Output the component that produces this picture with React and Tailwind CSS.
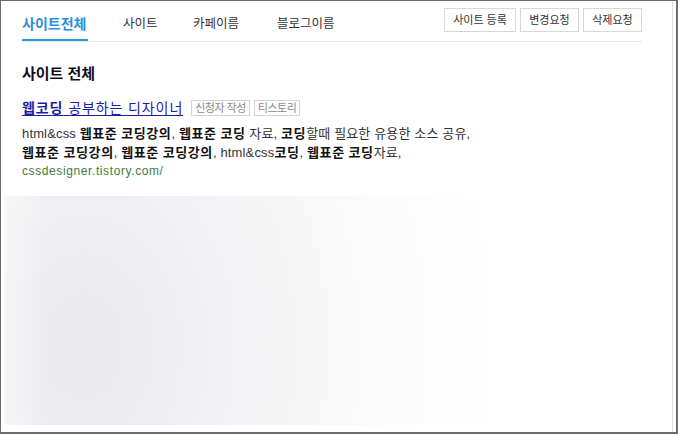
export default function App() {
  const font = "font-['Liberation_Sans','Noto_Sans_CJK_KR',sans-serif]";
  const B = ({ children }) => <b className="font-bold text-[#111] tracking-[0.6px]">{children}</b>;
  return (
    <div className={`w-[678px] h-[434px] box-border border-l border-t border-r-2 border-b-2 border-[#6b6b6b] bg-white flex ${font}`}>
      <div className="flex-1 flex flex-col min-w-0">
        {/* header */}
        <div className="ml-[21px] w-[620px] h-[41px] box-border border-b border-[#e8e8e8] flex justify-between shrink-0">
          <div className="flex h-full">
            <div className="w-[66px] h-full box-border border-b-2 border-[#2a9be0] pt-[14px] leading-[18px] text-[14px] font-bold text-[#2b8fdc] mr-[35px] whitespace-nowrap">사이트전체</div>
            <div className="w-[70px] h-full pt-[14px] leading-[18px] text-[12.5px] text-[#333]">사이트</div>
            <div className="w-[84px] h-full pt-[14px] leading-[18px] text-[12.5px] text-[#333]">카페이름</div>
            <div className="h-full pt-[14px] leading-[18px] text-[12.5px] text-[#333]">블로그이름</div>
          </div>
          <div className="flex items-start gap-[4px] pt-[7px]">
            <div className="w-[72px] h-[24px] box-border border border-[#d8d8d8] flex items-center justify-center text-[11px] text-[#333]">사이트 등록</div>
            <div className="w-[59px] h-[24px] box-border border border-[#d8d8d8] flex items-center justify-center text-[11px] text-[#333]">변경요청</div>
            <div className="w-[59px] h-[24px] box-border border border-[#d8d8d8] flex items-center justify-center text-[11px] text-[#333]">삭제요청</div>
          </div>
        </div>

        {/* body */}
        <div className="ml-[21px]">
          <div className="mt-[22px] leading-[20px] text-[15px] font-bold text-[#140c1c]">사이트 전체</div>
          <div className="mt-[15px] h-[18px] flex items-center">
            <span className="text-[14px] text-[#1c1ca8] underline underline-offset-[2px] leading-[18px] tracking-[0.9px] whitespace-nowrap"><b className="font-bold">웹코딩</b> 공부하는 디자이너</span>
            <span className="ml-[8px] h-[16px] px-[3px] box-border border border-[#d4d4d4] text-[11px] text-[#8a8a8a] leading-[14px] tracking-[-0.5px]">신청자 작성</span>
            <span className="ml-[4px] h-[16px] px-[3px] box-border border border-[#d4d4d4] text-[11px] text-[#8a8a8a] leading-[14px] tracking-[-0.5px]">티스토리</span>
          </div>
          <div className="mt-[7px] text-[13px] leading-[19px] text-[#333] tracking-[0.15px] whitespace-nowrap">
            <div>html&amp;css <B>웹표준</B> <B>코딩강의</B>, <B>웹표준</B> <B>코딩</B> 자료, <B>코딩</B>할때 필요한 유용한 소스 공유,</div>
            <div><B>웹표준</B> <B>코딩강의</B>, <B>웹표준</B> <B>코딩강의</B>, html&amp;css<B>코딩</B>, <B>웹표준</B> <B>코딩</B>자료,</div>
            <div className="text-[12px] text-[#3d7d3d] tracking-[0.6px]">cssdesigner.tistory.com/</div>
          </div>
        </div>

        <div className="ml-[4px] mt-[15px] w-[490px] h-[229px] bg-[radial-gradient(ellipse_420px_560px_at_78px_150px,#e9e9ee_0%,#eeeef1_20%,#f4f4f6_42%,#f9f9fa_64%,#fdfdfd_82%,#ffffff_100%)]">
          <div className="w-[40px] h-full bg-[linear-gradient(to_right,rgba(255,255,255,0.45),rgba(255,255,255,0))]"></div>
        </div>
      </div>
      <div className="w-px bg-[#dcdcdc] shrink-0"></div>
      <div className="w-[3px] shrink-0"></div>
    </div>
  );
}
